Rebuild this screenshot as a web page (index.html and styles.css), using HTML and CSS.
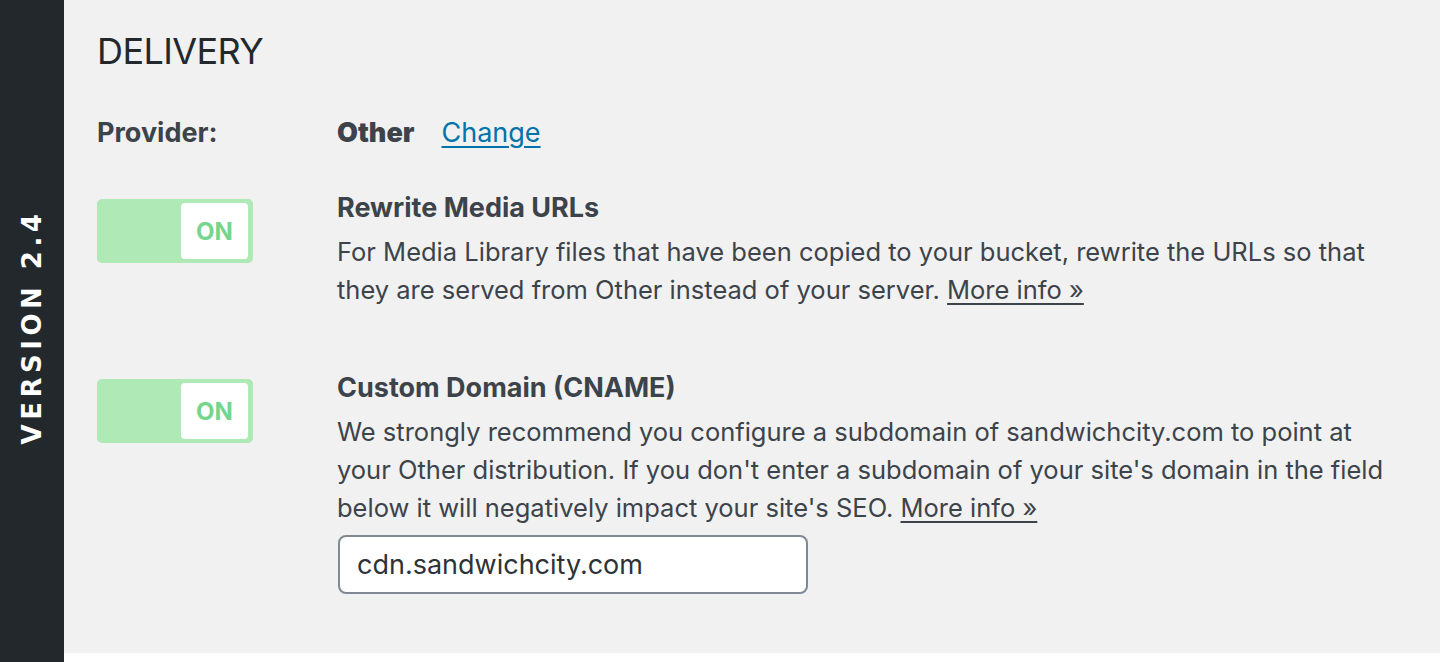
FILE: index.html
```html
<!DOCTYPE html>
<html lang="en">
<head>
<meta charset="utf-8">
<title>Delivery</title>
<link rel="stylesheet" href="styles.css">
</head>
<body>
<div class="page">
  <aside class="sidebar">
    <span class="version">VERSION 2.4</span>
  </aside>
  <main class="main">
    <h2 class="title">DELIVERY</h2>
    <div class="row provider-row">
      <div class="label">Provider:</div>
      <div class="content provider">
        <strong>Other</strong>
        <a href="#" class="change">Change</a>
      </div>
    </div>
    <div class="row setting">
      <div class="label">
        <div class="toggle"><span class="knob">ON</span></div>
      </div>
      <div class="content">
        <h4 class="setting-title">Rewrite Media URLs</h4>
        <p class="desc">For Media Library files that have been copied to your bucket, rewrite the URLs so that they are served from Other instead of your server. <a href="#" class="more">More info »</a></p>
      </div>
    </div>
    <div class="row setting second">
      <div class="label">
        <div class="toggle"><span class="knob">ON</span></div>
      </div>
      <div class="content">
        <h4 class="setting-title">Custom Domain (CNAME)</h4>
        <p class="desc">We strongly recommend you configure a subdomain of sandwichcity.com to point at your Other distribution. If you don't enter a subdomain of your site's domain in the field below it will negatively impact your site's SEO. <a href="#" class="more">More info »</a></p>
        <input class="domain" type="text" value="cdn.sandwichcity.com">
      </div>
    </div>
  </main>
</div>
</body>
</html>
```

FILE: styles.css
```css
html, body {
  margin: 0;
  padding: 0;
  background: #ffffff;
}
body {
  font-family: Inter, "Noto Sans", "Liberation Sans", sans-serif;
  color: #3c434a;
}
.page {
  display: flex;
  height: 662px;
}
.sidebar {
  width: 64px;
  flex: 0 0 64px;
  background: #23282d;
  display: flex;
  align-items: center;
  justify-content: center;
}
.version {
  display: block;
  transform: rotate(-90deg);
  white-space: nowrap;
  color: #ffffff;
  font-family: "DejaVu Sans", sans-serif;
  font-weight: 700;
  font-size: 26px;
  letter-spacing: 4.5px;
  margin-top: -8px;
}
.main {
  flex: 1;
  height: 653px;
  background: #f1f1f1;
  padding: 0 0 0 33px;
  box-sizing: border-box;
}
.title {
  margin: 0;
  padding-top: 29px;
  font-size: 36px;
  line-height: 44px;
  font-weight: 400;
  letter-spacing: -0.6px;
  color: #23282d;
}
.row {
  display: grid;
  grid-template-columns: 240px 1fr;
}
.provider-row {
  margin-top: 42px;
  font-size: 27px;
  line-height: 36px;
  font-weight: 700;
}
.provider {
  display: flex;
  gap: 27px;
}
.change {
  color: #0073aa;
  font-weight: 400;
  text-decoration: underline;
  text-underline-offset: 4px;
}
.setting {
  margin-top: 48px;
}
.setting.second {
  margin-top: 70px;
}
.setting .content {
  margin-top: -1px;
}
.toggle {
  width: 156px;
  height: 64px;
  background: #aee9b6;
  border-radius: 5px;
  box-sizing: border-box;
  padding: 4px 5px 4px 0;
  display: flex;
  justify-content: flex-end;
}
.knob {
  width: 67px;
  height: 56px;
  background: #ffffff;
  border-radius: 4px;
  display: flex;
  align-items: center;
  justify-content: center;
  color: #74d68d;
  font-weight: 700;
  font-size: 24px;
}
.setting-title {
  margin: 0;
  font-size: 27px;
  line-height: 20px;
  padding-top: 0;
  font-weight: 700;
  color: #3c434a;
}
.desc {
  margin: 0;
  padding-top: 15px;
  font-size: 25.5px;
  line-height: 38px;
  max-width: 1060px;
}
.more {
  color: #3c434a;
  text-decoration: underline;
  text-underline-offset: 4px;
}
.domain {
  display: block;
  margin-top: 8px;
  margin-left: 1px;
  width: 470px;
  height: 59px;
  box-sizing: border-box;
  border: 2px solid #7e8993;
  border-radius: 8px;
  background: #ffffff;
  padding: 0 17px;
  font-family: Inter, "Noto Sans", "Liberation Sans", sans-serif;
  font-size: 27px;
  color: #2c3338;
}
```
